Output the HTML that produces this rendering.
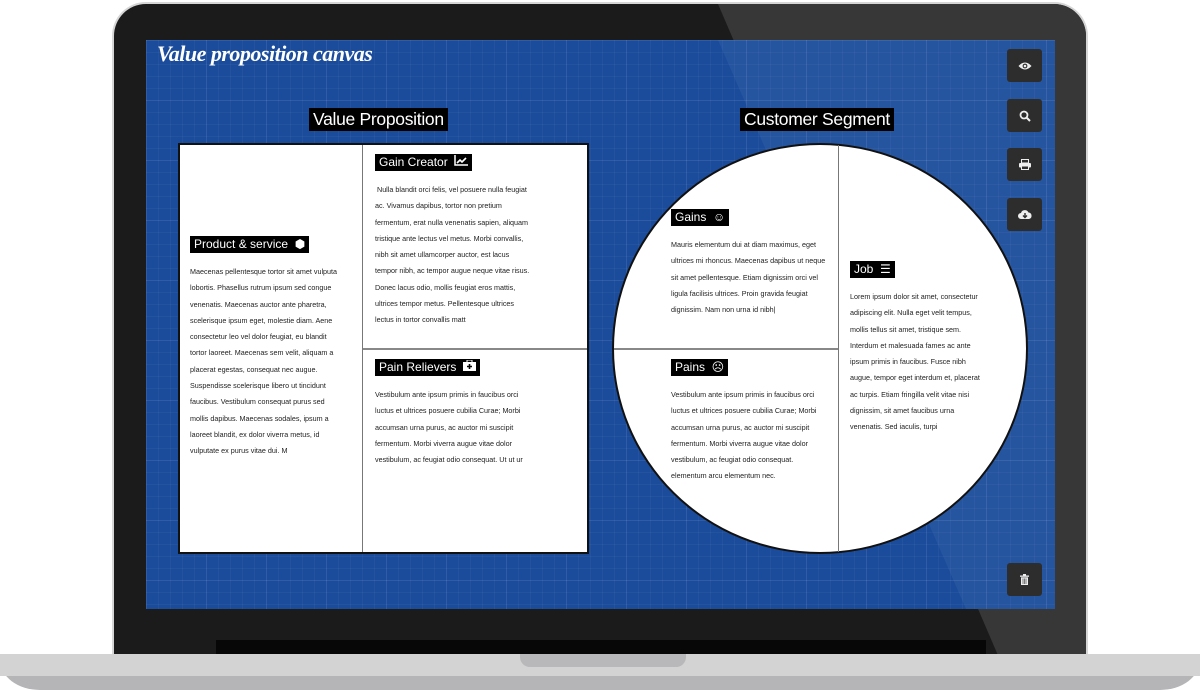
<!DOCTYPE html>
<html><head><meta charset="utf-8"><style>
*{margin:0;padding:0;box-sizing:border-box}
body{width:1200px;height:690px;background:#fff;position:relative;overflow:hidden;font-family:"Liberation Sans",sans-serif}
.abs{position:absolute}
#bezel{left:112px;top:2px;width:976px;height:670px;background:#1b1b1b;border-radius:34px 34px 0 0;border:2px solid #d6d6d6;border-bottom:none;overflow:hidden}
#glare{left:0;top:0;width:972px;height:670px;background:#373737;clip-path:polygon(604px 0,972px 0,972px 670px,892px 670px)}
#screen{left:146px;top:40px;width:909px;height:569px;background-color:#1b4c9b;
background-image:linear-gradient(rgba(255,255,255,.06) 1px,transparent 1px),linear-gradient(90deg,rgba(255,255,255,.06) 1px,transparent 1px),linear-gradient(rgba(255,255,255,.035) 1px,transparent 1px),linear-gradient(90deg,rgba(255,255,255,.035) 1px,transparent 1px);
background-size:60px 60px,60px 60px,12px 12px,12px 12px;overflow:hidden}
#sglare{left:0;top:0;width:909px;height:569px;background:rgba(255,255,255,.05);clip-path:polygon(572px 0,909px 0,909px 569px,820px 569px)}
.title{left:157px;top:41px;color:#fff;font:italic bold 22px "Liberation Serif",serif;letter-spacing:-0.5px}
.h{background:#000;color:#fff;font-size:17.5px;line-height:23px;padding:0 4px;height:23px;letter-spacing:-0.3px}
.lab{background:#000;color:#fff;font-size:12px;line-height:17px;height:17px;padding:0 4px;white-space:nowrap}
.txt{font-size:7.2px;line-height:16.3px;color:#222;white-space:nowrap}
.btn{left:1007px;width:35px;height:33px;background:#2d2d2d;border-radius:3px;display:flex;align-items:center;justify-content:center}
</style></head><body>
<div id="bezel" class="abs"><div id="glare" class="abs"></div></div>
<div id="screen" class="abs"><div id="sglare" class="abs"></div></div>
<div class="title abs">Value proposition canvas</div>

<div class="h abs" style="left:309px;top:108px">Value Proposition</div>
<div class="h abs" style="left:740px;top:108px">Customer Segment</div>

<div class="abs" style="left:178px;top:143px;width:411px;height:411px;background:#fff;border:2px solid #111"></div>
<div class="abs" style="left:362px;top:145px;width:1px;height:407px;background:#777"></div>
<div class="abs" style="left:363px;top:348px;width:224px;height:2px;background:#888"></div>

<div class="abs" style="left:612px;top:143px;width:416px;height:411px;border-radius:50%;background:#fff;border:2px solid #111"></div>
<div class="abs" style="left:838px;top:145px;width:1px;height:407px;background:#777"></div>
<div class="abs" style="left:614px;top:348px;width:224px;height:2px;background:#888"></div>

<div class="lab abs" style="left:190px;top:236px">Product &amp; service &nbsp;⬢</div>
<div class="txt abs" style="left:190px;top:264px">Maecenas pellentesque tortor sit amet vulputa<br>lobortis. Phasellus rutrum ipsum sed congue<br>venenatis. Maecenas auctor ante pharetra,<br>scelerisque ipsum eget, molestie diam. Aene<br>consectetur leo vel dolor feugiat, eu blandit<br>tortor laoreet. Maecenas sem velit, aliquam a<br>placerat egestas, consequat nec augue.<br>Suspendisse scelerisque libero ut tincidunt<br>faucibus. Vestibulum consequat purus sed<br>mollis dapibus. Maecenas sodales, ipsum a<br>laoreet blandit, ex dolor viverra metus, id<br>vulputate ex purus vitae dui. M</div>

<div class="lab abs" style="left:375px;top:154px">Gain Creator &nbsp;<svg width="14" height="11" viewBox="0 0 14 11"><path d="M1 0V10H14" stroke="#fff" stroke-width="1.5" fill="none"/><path d="M3 8L6 5L8 7L12 3" stroke="#fff" stroke-width="1.6" fill="none"/></svg></div>
<div class="txt abs" style="left:375px;top:182px">&nbsp;Nulla blandit orci felis, vel posuere nulla feugiat<br>ac. Vivamus dapibus, tortor non pretium<br>fermentum, erat nulla venenatis sapien, aliquam<br>tristique ante lectus vel metus. Morbi convallis,<br>nibh sit amet ullamcorper auctor, est lacus<br>tempor nibh, ac tempor augue neque vitae risus.<br>Donec lacus odio, mollis feugiat eros mattis,<br>ultrices tempor metus. Pellentesque ultrices<br>lectus in tortor convallis matt</div>

<div class="lab abs" style="left:375px;top:359px">Pain Relievers &nbsp;<svg width="13" height="11" viewBox="0 0 13 11"><rect x="0" y="2" width="13" height="9" fill="#fff"/><rect x="4" y="0" width="5" height="3" fill="none" stroke="#fff"/><path d="M6.5 4V9M4 6.5H9" stroke="#000" stroke-width="1.6"/></svg></div>
<div class="txt abs" style="left:375px;top:387px">Vestibulum ante ipsum primis in faucibus orci<br>luctus et ultrices posuere cubilia Curae; Morbi<br>accumsan urna purus, ac auctor mi suscipit<br>fermentum. Morbi viverra augue vitae dolor<br>vestibulum, ac feugiat odio consequat. Ut ut ur</div>

<div class="lab abs" style="left:671px;top:209px">Gains &nbsp;☺</div>
<div class="txt abs" style="left:671px;top:237px">Mauris elementum dui at diam maximus, eget<br>ultrices mi rhoncus. Maecenas dapibus ut neque<br>sit amet pellentesque. Etiam dignissim orci vel<br>ligula facilisis ultrices. Proin gravida feugiat<br>dignissim. Nam non urna id nibh|</div>

<div class="lab abs" style="left:671px;top:359px">Pains &nbsp;☹</div>
<div class="txt abs" style="left:671px;top:387px">Vestibulum ante ipsum primis in faucibus orci<br>luctus et ultrices posuere cubilia Curae; Morbi<br>accumsan urna purus, ac auctor mi suscipit<br>fermentum. Morbi viverra augue vitae dolor<br>vestibulum, ac feugiat odio consequat.<br>elementum arcu elementum nec.</div>

<div class="lab abs" style="left:850px;top:261px">Job &nbsp;☰</div>
<div class="txt abs" style="left:850px;top:289px">Lorem ipsum dolor sit amet, consectetur<br>adipiscing elit. Nulla eget velit tempus,<br>mollis tellus sit amet, tristique sem.<br>Interdum et malesuada fames ac ante<br>ipsum primis in faucibus. Fusce nibh<br>augue, tempor eget interdum et, placerat<br>ac turpis. Etiam fringilla velit vitae nisi<br>dignissim, sit amet faucibus urna<br>venenatis. Sed iaculis, turpi</div>

<div class="btn abs" style="top:49px"><svg width="14" height="10" viewBox="0 0 14 10"><path d="M0.5 5Q7 -2 13.5 5Q7 12 0.5 5Z" fill="#eee"/><circle cx="7" cy="5" r="2.4" fill="#2d2d2d"/><circle cx="7" cy="5" r="1.3" fill="#eee"/></svg></div>
<div class="btn abs" style="top:99px"><svg width="12" height="12" viewBox="0 0 12 12"><circle cx="5" cy="5" r="3.5" stroke="#eee" stroke-width="1.8" fill="none"/><path d="M7.5 7.5L11 11" stroke="#eee" stroke-width="2"/></svg></div>
<div class="btn abs" style="top:148px"><svg width="12" height="11" viewBox="0 0 12 11"><rect x="2.5" y="0.5" width="7" height="3.5" fill="none" stroke="#eee"/><rect x="0" y="4" width="12" height="4.5" fill="#eee" rx="1"/><rect x="2.5" y="7" width="7" height="3.5" fill="#2d2d2d" stroke="#eee"/></svg></div>
<div class="btn abs" style="top:198px"><svg width="14" height="11" viewBox="0 0 14 11"><path d="M3 10A3 3 0 0 1 3 4A4 4 0 0 1 10.5 3.5A3.3 3.3 0 0 1 11 10Z" fill="#eee"/><path d="M7 4V8M5 6.5L7 8.5L9 6.5" stroke="#2d2d2d" stroke-width="1.4" fill="none"/></svg></div>
<div class="btn abs" style="top:563px"><svg width="9" height="11" viewBox="0 0 9 11"><rect x="0" y="1.5" width="9" height="1.3" fill="#eee"/><rect x="3" y="0" width="3" height="1.5" fill="#eee"/><rect x="1" y="3.3" width="7" height="7.7" fill="#eee"/><path d="M3 4.5V10M4.5 4.5V10M6 4.5V10" stroke="#2d2d2d" stroke-width="0.6"/></svg></div>

<div class="abs" style="left:216px;top:640px;width:770px;height:15px;background:#070707"></div>
<div class="abs" style="left:0;top:654px;width:1200px;height:36px;background:#b5b5b8;border-radius:0 0 40px 40px / 0 0 30px 30px"></div>
<div class="abs" style="left:0;top:654px;width:1200px;height:22px;background:#d3d3d3"></div>
<div class="abs" style="left:520px;top:654px;width:166px;height:13px;background:#b8b8ba;border-radius:0 0 10px 10px"></div>
</body></html>
